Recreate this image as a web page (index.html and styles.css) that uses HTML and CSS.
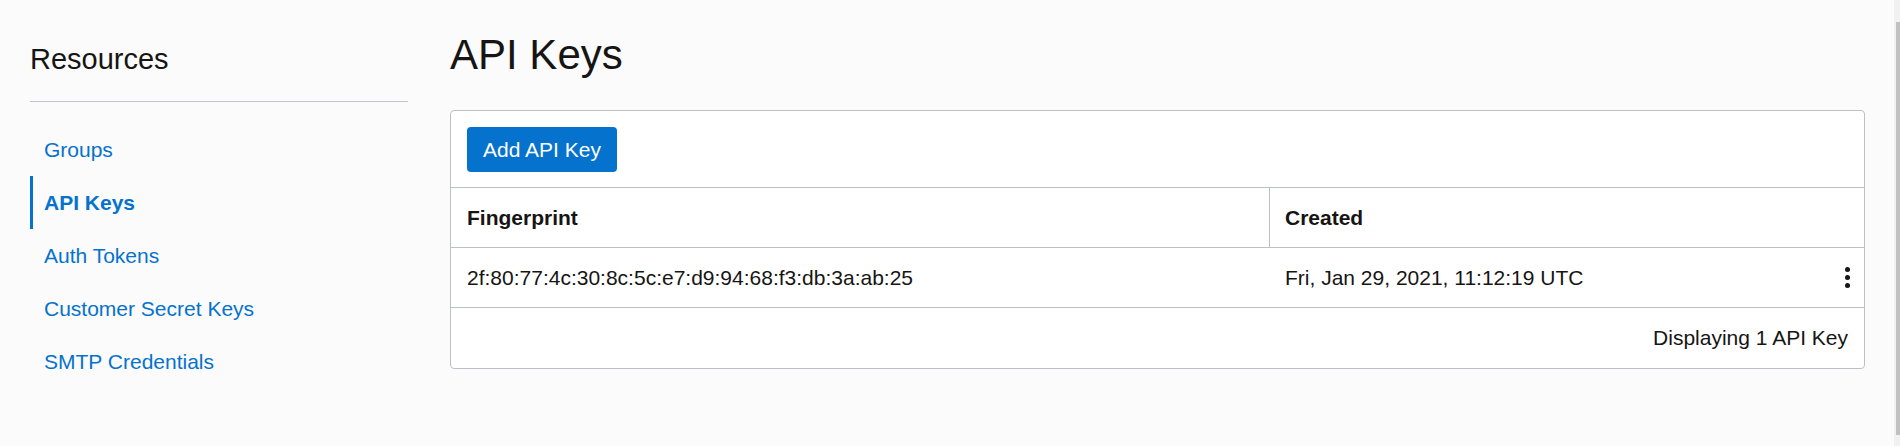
FILE: index.html
```html
<!DOCTYPE html>
<html lang="en">
<head>
<meta charset="utf-8">
<title>API Keys</title>
<link rel="stylesheet" href="styles.css">
</head>
<body>
<div class="page">
  <aside class="sidebar">
    <h2 class="sidebar-title">Resources</h2>
    <nav class="nav">
      <a class="nav-item" href="#">Groups</a>
      <a class="nav-item active" href="#">API Keys</a>
      <a class="nav-item" href="#">Auth Tokens</a>
      <a class="nav-item" href="#">Customer Secret Keys</a>
      <a class="nav-item" href="#">SMTP Credentials</a>
    </nav>
  </aside>
  <main class="main">
    <h1 class="title">API Keys</h1>
    <section class="card">
      <div class="toolbar">
        <button class="btn" type="button">Add API Key</button>
      </div>
      <div class="table">
        <div class="row head">
          <div class="cell">Fingerprint</div>
          <div class="cell cell-created">Created</div>
        </div>
        <div class="row">
          <div class="cell">2f:80:77:4c:30:8c:5c:e7:d9:94:68:f3:db:3a:ab:25</div>
          <div class="cell cell-created">
            <span>Fri, Jan 29, 2021, 11:12:19 UTC</span>
            <svg class="kebab" width="5" height="21" viewBox="0 0 5 21" aria-hidden="true">
              <circle cx="2.5" cy="2.5" r="2.5"/>
              <circle cx="2.5" cy="10.5" r="2.5"/>
              <circle cx="2.5" cy="18.5" r="2.5"/>
            </svg>
          </div>
        </div>
      </div>
      <div class="footer">Displaying 1 API Key</div>
    </section>
  </main>
</div>
<div class="scrollbar"><div class="scrollbar-thumb"></div></div>
</body>
</html>
```
FILE: styles.css
```css
html, body {
  margin: 0;
  padding: 0;
}

body {
  background: #fbfbfb;
  font-family: "Liberation Sans", Arial, sans-serif;
  color: #161513;
  overflow: hidden;
}

.page {
  display: flex;
  gap: 42px;
  padding: 0 35px 0 30px;
}

/* Sidebar */
.sidebar {
  flex: none;
  width: 378px;
  padding-top: 42px;
}

.sidebar-title {
  margin: 0;
  font-size: 29px;
  line-height: 35px;
  font-weight: 400;
  color: #161513;
  padding-bottom: 24px;
  border-bottom: 1px solid #c2c4ca;
}

.nav {
  display: flex;
  flex-direction: column;
  margin-top: 20.5px;
}

.nav-item {
  display: block;
  height: 53px;
  line-height: 53px;
  font-size: 21px;
  color: #0572ce;
  text-decoration: none;
  padding-left: 11px;
  border-left: 3px solid transparent;
}

.nav-item.active {
  font-weight: 700;
  border-left-color: #0572ce;
}

/* Main */
.main {
  flex: 1;
  min-width: 0;
  padding-top: 31px;
}

.title {
  margin: 0 0 31px;
  font-size: 42px;
  line-height: 48px;
  font-weight: 400;
  color: #161513;
}

.card {
  background: #fff;
  border: 1px solid #bcbfc5;
  border-radius: 4px;
}

.toolbar {
  padding: 16px 16px 15px;
}

.btn {
  height: 45px;
  padding: 0 16px;
  border: none;
  border-radius: 4px;
  background: #0572ce;
  color: #fff;
  font-family: inherit;
  font-size: 21px;
  cursor: pointer;
}

.row {
  display: grid;
  grid-template-columns: 818px 1fr;
  height: 60px;
  box-sizing: border-box;
  border-top: 1px solid #bcbfc5;
  font-size: 21px;
}

.cell {
  display: flex;
  align-items: center;
  padding: 0 16px;
}

.head .cell {
  font-weight: 700;
}

.head .cell-created {
  border-left: 1px solid #bcbfc5;
  padding-left: 15px;
}

.cell-created {
  justify-content: space-between;
  padding-right: 14px;
}

.kebab {
  fill: #161513;
  display: block;
}

.footer {
  display: flex;
  justify-content: flex-end;
  align-items: center;
  height: 61px;
  box-sizing: border-box;
  padding: 0 16px;
  border-top: 1px solid #bcbfc5;
  font-size: 21px;
}

/* Scrollbar overlay */
.scrollbar {
  position: fixed;
  top: 0;
  right: 0;
  width: 6px;
  height: 100%;
  background: #f1f1f1;
}

.scrollbar-thumb {
  margin: 22px 0 0 2px;
  width: 4px;
  height: 413px;
  background: #c1c1c1;
}
```
